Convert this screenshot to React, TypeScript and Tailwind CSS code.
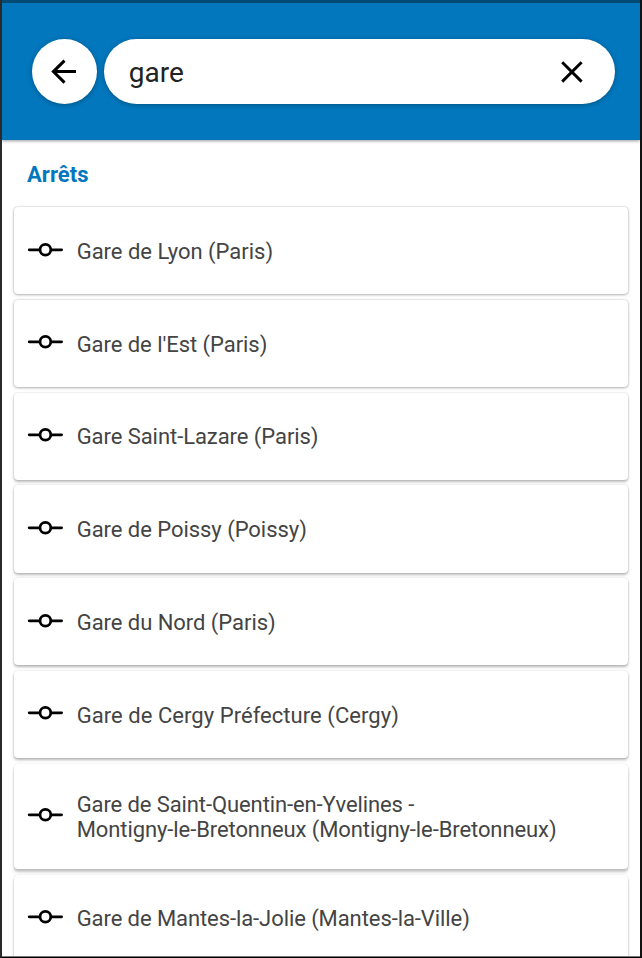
type Line = { text: string; tracking: string };

const stops: Line[][] = [
  [{ text: "Gare de Lyon (Paris)", tracking: "tracking-[-0.02px]" }],
  [{ text: "Gare de l'Est (Paris)", tracking: "tracking-[-0.05px]" }],
  [{ text: "Gare Saint-Lazare (Paris)", tracking: "tracking-[-0.06px]" }],
  [{ text: "Gare de Poissy (Poissy)", tracking: "tracking-[-0.04px]" }],
  [{ text: "Gare du Nord (Paris)", tracking: "tracking-[-0.04px]" }],
  [{ text: "Gare de Cergy Préfecture (Cergy)", tracking: "tracking-[0.05px]" }],
  [
    { text: "Gare de Saint-Quentin-en-Yvelines -", tracking: "tracking-[-0.1px]" },
    { text: "Montigny-le-Bretonneux (Montigny-le-Bretonneux)", tracking: "tracking-[-0.09px]" },
  ],
  [{ text: "Gare de Mantes-la-Jolie (Mantes-la-Ville)", tracking: "tracking-[-0.08px]" }],
];

// Elevation grows slightly for cards further down the screen.
const shadows = [
  "shadow-[0_0_2px_rgba(0,0,0,0.24),0_1px_3px_rgba(0,0,0,0.26)]",
  "shadow-[0_0_2px_rgba(0,0,0,0.18),0_2px_3px_rgba(0,0,0,0.26)]",
  "shadow-[0_0_2px_rgba(0,0,0,0.15),0_2px_3px_rgba(0,0,0,0.28)]",
  "shadow-[0_0_2px_rgba(0,0,0,0.12),0_3px_3px_rgba(0,0,0,0.24)]",
];

function StopIcon() {
  return (
    <svg width="36" height="16" viewBox="0 0 36 16" fill="none" stroke="#000" strokeWidth="2.8" strokeLinecap="round" className="relative -top-px shrink-0">
      <path d="M2.2 7.8H12.2M24.7 7.8H34.6" />
      <circle cx="18.4" cy="7.8" r="5.4" />
    </svg>
  );
}

function StopCard({ lines, index }: { lines: Line[]; index: number }) {
  const height = lines.length > 1 ? "h-[105.5px]" : "h-[87.25px]";
  const shadow = shadows[Math.min(3, Math.floor(index / 2))];
  return (
    <li className={`flex shrink-0 items-center rounded-[4px] bg-white pl-[13px] ${height} ${shadow}`}>
      <StopIcon />
      <div className="ml-[13.7px] pt-[2.2px] text-[22px] leading-[25.5px] text-[#444]">
        {lines.map((line) => (
          <div key={line.text} className={`whitespace-nowrap ${line.tracking}`}>{line.text}</div>
        ))}
      </div>
    </li>
  );
}

export default function App() {
  return (
    <div className="flex h-[958px] w-[642px] flex-col overflow-hidden border-x-2 border-b border-l-[#2a2a2a] border-r-[#111] border-b-black bg-white font-[Roboto,sans-serif]">
      <header className="z-10 flex h-[140px] shrink-0 items-start gap-[7.2px] border-t-[3px] border-[#034a75] bg-[#0277bd] pl-[29.6px] pt-9 shadow-[0_1px_3px_rgba(0,0,0,0.4)]">
        <button aria-label="Retour" className="flex size-[65px] items-center justify-center rounded-full bg-white pr-px shadow-[0_1px_5px_rgba(0,0,0,0.3)]">
          <svg width="26" height="26" viewBox="0 0 26 26" fill="none" stroke="#000" strokeWidth="3">
            <path d="M25 12.6H3M13.5 1.6L2.4 12.6L13.5 23.6" />
          </svg>
        </button>
        <div className="flex h-[65px] w-[511px] items-center justify-between rounded-full bg-white pl-[25px] pr-8 shadow-[0_1px_5px_rgba(0,0,0,0.3)]">
          <span className="pt-[2px] text-[28px] leading-8 text-[#222]">gare</span>
          <svg width="22" height="22" viewBox="0 0 22 22" fill="none" stroke="#000" strokeWidth="2.9" aria-label="Effacer">
            <path d="M1.2 1.2L20.6 20.6M20.6 1.2L1.2 20.6" />
          </svg>
        </div>
      </header>
      <main className="flex min-h-0 flex-1 flex-col overflow-hidden border-b border-[#777]">
        <h2 className="h-[67px] shrink-0 pl-[25px] pt-[22px] text-[22px] font-bold leading-[26px] tracking-[0.05px] text-[#0277bd]">Arrêts</h2>
        <ul className="flex flex-col gap-[5.5px] px-3">
          {stops.map((lines, index) => (
            <StopCard key={lines[0].text} lines={lines} index={index} />
          ))}
        </ul>
      </main>
    </div>
  );
}
